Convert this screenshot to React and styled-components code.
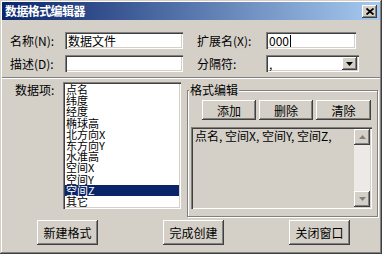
import React from 'react';
import styled, { createGlobalStyle } from 'styled-components';

const GlobalStyle = createGlobalStyle`
  html, body { margin: 0; padding: 0; background: #fff; }
  body { font-family: "Noto Sans CJK SC", "Noto Sans", sans-serif; font-size: 12px; color: #000; }
  * { box-sizing: border-box; }
`;

const raised = `
  box-shadow: inset -1px -1px #404040, inset 1px 1px #fff, inset -2px -2px #808080, inset 2px 2px #d4d0c8;
`;

const sunken = `
  box-shadow: inset 1px 1px #808080, inset 2px 2px #404040, inset -1px -1px #fff, inset -2px -2px #d4d0c8;
`;

const Window = styled.div`
    width: 382px;
    height: 254px;
    padding: 2px;
    background: #d4d0c8;
    box-shadow: inset -1px -1px #404040, inset 1px 1px #d4d0c8, inset -2px -2px #808080, inset 2px 2px #fff;
    display: flex;
    flex-direction: column;
`;

const TitleBar = styled.div`
    height: 18px;
    display: flex;
    align-items: center;
    justify-content: space-between;
    padding: 0 3px;
    background: linear-gradient(to right, #0a246a, #a6caf0);
`;

const Title = styled.span`
    color: #fff;
    font-weight: bold;
    font-size: 12px;
    letter-spacing: -0.6px;
    line-height: 18px;
`;

const CloseButton = styled.div`
    width: 15px;
    height: 13px;
    background: #d4d0c8;
    display: flex;
    align-items: center;
    justify-content: center;
    ${raised}
`;

const Fields = styled.div`
    display: grid;
    grid-template-columns: 55px 118px 83px 94px;
    grid-template-rows: 17px 17px;
    row-gap: 6px;
    padding: 12px 0 0 8px;
    align-items: center;
`;

const Label = styled.div`
    line-height: 17px;
    white-space: nowrap;
    padding-left: ${p => p.indent || 0}px;
`;

const TextBox = styled.div`
    height: 17px;
    width: ${p => p.width}px;
    background: #fff;
    padding: 0 3px;
    line-height: 17px;
    white-space: nowrap;
    display: flex;
    align-items: center;
    ${sunken}
`;

const Caret = styled.span`
    width: 1px;
    height: 12px;
    background: #000;
    margin-left: 1px;
`;

const Select = styled(TextBox)`
    justify-content: space-between;
    padding: 0 2px 0 3px;
`;

const DropButton = styled.div`
    width: 15px;
    height: 13px;
    background: #d4d0c8;
    display: flex;
    align-items: center;
    justify-content: center;
    ${raised}
`;

const Separator = styled.div`
    height: 2px;
    margin-top: 5px;
    border-top: 1px solid #808080;
    border-bottom: 1px solid #fff;
`;

const Middle = styled.div`
    display: flex;
    height: 138px;
`;

const ItemsLabel = styled.div`
    width: 61px;
    padding: 4px 0 0 13px;
    line-height: 13px;
`;

const ListBox = styled.div`
    width: 118px;
    height: 127px;
    margin-top: 3px;
    background: #fff;
    padding: 2px 2px 0 2px;
    overflow: hidden;
    ${sunken}
`;

const ListItem = styled.div`
    height: 11.2px;
    line-height: 11.2px;
    font-size: 11px;
    padding-left: 1px;
    white-space: nowrap;
    background: ${p => (p.selected ? '#0a246a' : 'transparent')};
    color: ${p => (p.selected ? '#fff' : '#000')};
`;

const Group = styled.fieldset`
    width: 191px;
    height: 133px;
    margin: 5px 0 0 6px;
    padding: 4px 3px 0 3px;
    min-width: 0;
    border: 1px solid #808080;
    box-shadow: 1px 1px 0 #fff, inset 1px 1px 0 #fff;
`;

const Legend = styled.legend`
    padding: 0 1px;
    margin-left: -2px;
    line-height: 12px;
    background: #d4d0c8;
`;

const ButtonRow = styled.div`
    display: flex;
    gap: 3px;
    padding-left: 11px;
`;

const Button = styled.div`
    width: ${p => p.width}px;
    height: ${p => p.height}px;
    background: #d4d0c8;
    display: flex;
    align-items: center;
    justify-content: center;
    ${raised}
`;

const Memo = styled.div`
    width: 181px;
    height: 82px;
    margin-top: 7px;
    background: #d4d0c8;
    padding: 2px;
    display: flex;
    ${sunken}
`;

const MemoText = styled.div`
    flex: 1;
    padding: 1px 0 0 2px;
    line-height: 12px;
    white-space: nowrap;
`;

const ScrollBar = styled.div`
    width: 16px;
    display: flex;
    flex-direction: column;
    justify-content: space-between;
    background: #eceae6;
`;

const ScrollButton = styled.div`
    width: 16px;
    height: 16px;
    background: #d4d0c8;
    display: flex;
    align-items: center;
    justify-content: center;
    ${raised}
`;

const Footer = styled.div`
    display: flex;
    gap: 65px;
    margin-top: 3px;
    padding-left: 35px;
`;

const items = ['点名', '纬度', '经度', '椭球高', '北方向X', '东方向Y', '水准高', '空间X', '空间Y', '空间Z', '其它'];

const Arrow = ({ up, color = '#000' }) => (
    <svg width="7" height="4" viewBox="0 0 7 4">
        <polygon points={up ? '3.5,0 7,4 0,4' : '0,0 7,0 3.5,4'} fill={color} />
    </svg>
);

const App = () => (
    <>
        <GlobalStyle />
        <Window>
            <TitleBar>
                <Title>数据格式编辑器</Title>
                <CloseButton>
                    <svg width="8" height="7" viewBox="0 0 8 7">
                        <path d="M0.5 0.5 L7.5 6.5 M7.5 0.5 L0.5 6.5" stroke="#000" strokeWidth="1.8" />
                    </svg>
                </CloseButton>
            </TitleBar>
            <Fields>
                <Label>名称(N):</Label>
                <TextBox width={118}>数据文件</TextBox>
                <Label indent={14}>扩展名(X):</Label>
                <TextBox width={90}>
                    000
                    <Caret />
                </TextBox>
                <Label>描述(D):</Label>
                <TextBox width={118} />
                <Label indent={14}>分隔符:</Label>
                <Select width={93}>
                    <span>,</span>
                    <DropButton>
                        <Arrow />
                    </DropButton>
                </Select>
            </Fields>
            <Separator />
            <Middle>
                <ItemsLabel>数据项:</ItemsLabel>
                <ListBox>
                    {items.map(x => (
                        <ListItem key={x} selected={x === '空间Z'}>
                            {x}
                        </ListItem>
                    ))}
                </ListBox>
                <Group>
                    <Legend>格式编辑</Legend>
                    <ButtonRow>
                        <Button width={54} height={20}>添加</Button>
                        <Button width={54} height={20}>删除</Button>
                        <Button width={55} height={20}>清除</Button>
                    </ButtonRow>
                    <Memo>
                        <MemoText>点名, 空间X, 空间Y, 空间Z,</MemoText>
                        <ScrollBar>
                            <ScrollButton>
                                <Arrow up color="#808080" />
                            </ScrollButton>
                            <ScrollButton>
                                <Arrow color="#808080" />
                            </ScrollButton>
                        </ScrollBar>
                    </Memo>
                </Group>
            </Middle>
            <Footer>
                <Button width={61} height={25}>新建格式</Button>
                <Button width={61} height={25}>完成创建</Button>
                <Button width={61} height={25}>关闭窗口</Button>
            </Footer>
        </Window>
    </>
);

export default App;
